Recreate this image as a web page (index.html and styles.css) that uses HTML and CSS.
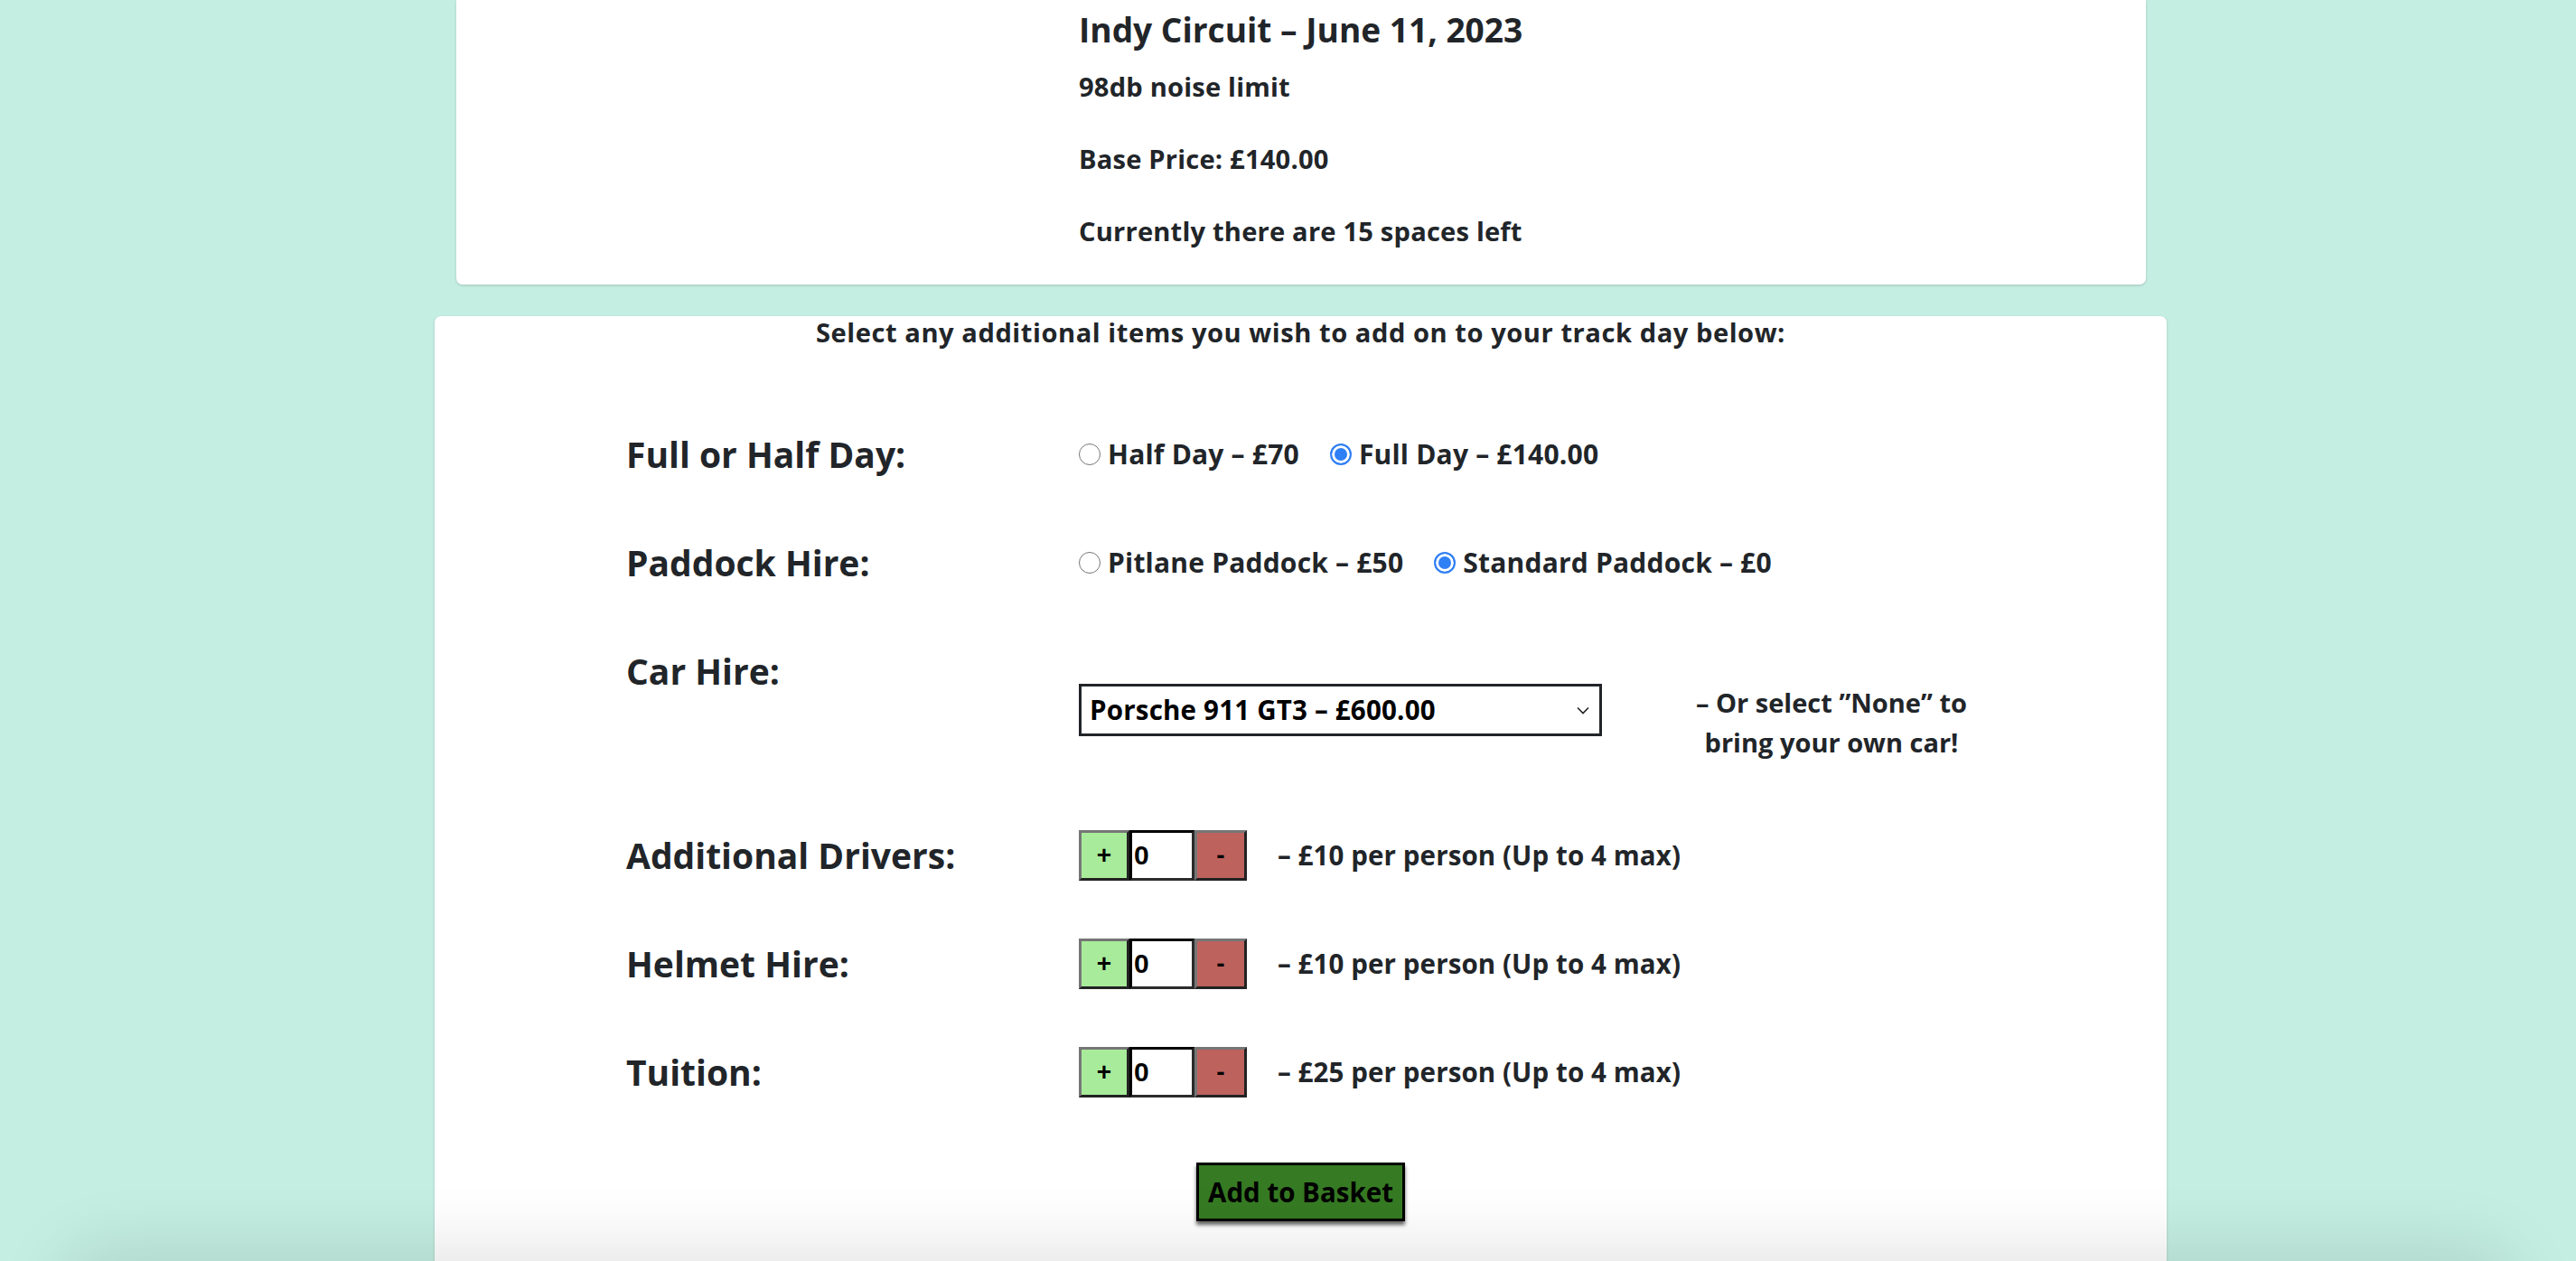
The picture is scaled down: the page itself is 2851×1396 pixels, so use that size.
FILE: index.html
```html
<!DOCTYPE html>
<html lang="en">
<head>
<meta charset="utf-8">
<title>Indy Circuit – June 11, 2023</title>
<link rel="stylesheet" href="styles.css">
</head>
<body>
<main class="page">
  <section class="card info">
    <h2 class="title">Indy Circuit – June 11, 2023</h2>
    <p class="fact">98db noise limit</p>
    <p class="fact">Base Price: £140.00</p>
    <p class="fact">Currently there are 15 spaces left</p>
  </section>

  <section class="card options">
    <p class="intro">Select any additional items you wish to add on to your track day below:</p>
    <div class="rows">
      <div class="row">
        <h3 class="label">Full or Half Day:</h3>
        <div class="control">
          <label class="opt"><input type="radio" name="day"><span>Half Day – £70</span></label>
          <label class="opt"><input type="radio" name="day" checked><span>Full Day – £140.00</span></label>
        </div>
      </div>
      <div class="row">
        <h3 class="label">Paddock Hire:</h3>
        <div class="control">
          <label class="opt"><input type="radio" name="paddock"><span>Pitlane Paddock – £50</span></label>
          <label class="opt"><input type="radio" name="paddock" checked><span>Standard Paddock – £0</span></label>
        </div>
      </div>
      <div class="row car">
        <h3 class="label">Car Hire:</h3>
        <div class="control">
          <div class="select-wrap">
            <select class="car-select">
              <option>Porsche 911 GT3 – £600.00</option>
              <option>None</option>
            </select>
            <svg class="chev" width="14" height="9" viewBox="0 0 14 9"><path d="M1 1.5 L7 7.5 L13 1.5" fill="none" stroke="#222" stroke-width="1.6"/></svg>
          </div>
        </div>
        <p class="note">– Or select ”None” to<br>bring your own car!</p>
      </div>
      <div class="row">
        <h3 class="label">Additional Drivers:</h3>
        <div class="control">
          <div class="stepper"><button class="step plus">+</button><input class="qty" type="text" value="0"><button class="step minus">-</button></div>
          <span class="desc">– £10 per person (Up to 4 max)</span>
        </div>
      </div>
      <div class="row">
        <h3 class="label">Helmet Hire:</h3>
        <div class="control">
          <div class="stepper"><button class="step plus">+</button><input class="qty" type="text" value="0"><button class="step minus">-</button></div>
          <span class="desc">– £10 per person (Up to 4 max)</span>
        </div>
      </div>
      <div class="row">
        <h3 class="label">Tuition:</h3>
        <div class="control">
          <div class="stepper"><button class="step plus">+</button><input class="qty" type="text" value="0"><button class="step minus">-</button></div>
          <span class="desc">– £25 per person (Up to 4 max)</span>
        </div>
      </div>
    </div>
    <div class="actions"><button class="basket">Add to Basket</button></div>
  </section>
</main>
<div class="fade"></div>
</body>
</html>
```

FILE: styles.css
```css
html, body {
  margin: 0;
  padding: 0;
}
body {
  background: #c4eee2;
  font-family: "Open Sans", "Liberation Sans", sans-serif;
  font-weight: 700;
  color: #212529;
  overflow: hidden;
}
.page {
  display: flex;
  flex-direction: column;
  align-items: flex-start;
  gap: 35px;
}
.card {
  background: #fff;
  border-radius: 0 0 7px 7px;
  box-shadow: 0 1px 3px rgba(0, 0, 0, 0.18);
  box-sizing: border-box;
}
.info {
  margin-left: 505px;
  width: 1870px;
  padding: 11px 0 0 689px;
}
.title {
  margin: 0 0 20px;
  font-size: 37.1px;
  line-height: 43.7px;
  font-weight: 700;
  letter-spacing: 0;
}
.fact {
  margin: 0 0 36.4px;
  font-size: 29.1px;
  line-height: 43.6px;
  letter-spacing: 0.2px;
}
.options {
  margin-left: 481px;
  width: 1917px;
  border-radius: 7px 7px 0 0;
  padding: 1px 0 80px;
}
.intro {
  margin: 0 0 57px;
  text-align: center;
  font-size: 29.1px;
  line-height: 35px;
  letter-spacing: 0.55px;
}
.rows {
  display: flex;
  flex-direction: column;
  padding-left: 212px;
}
.row {
  display: grid;
  grid-template-columns: 501px 640px 386px;
  align-items: center;
  height: 120px;
}
.label {
  margin: 0;
  font-size: 39px;
  line-height: 43.7px;
  font-weight: 700;
  letter-spacing: 0;
  white-space: nowrap;
}
.control {
  display: flex;
  align-items: center;
  white-space: nowrap;
}
.opt {
  display: inline-flex;
  align-items: center;
  gap: 8px;
  margin-right: 34px;
  font-size: 30px;
  line-height: 35px;
  letter-spacing: 0.2px;
}
.opt input {
  appearance: none;
  -webkit-appearance: none;
  margin: 0;
  width: 24px;
  height: 24px;
  border-radius: 50%;
  border: 1.8px solid #767676;
  background: #fff;
  box-sizing: border-box;
  flex: none;
}
.opt input:checked {
  border: 2px solid #2f7ff5;
  background: #2f7ff5;
  box-shadow: inset 0 0 0 3px #fff;
}
.row.car {
  height: 204px;
  align-items: start;
}
.row.car .label {
  padding-top: 38px;
}
.row.car .control {
  margin-top: 74px;
}
.select-wrap {
  position: relative;
  display: inline-block;
}
.car-select {
  appearance: none;
  -webkit-appearance: none;
  width: 579px;
  height: 58px;
  border: 3.6px solid #212529;
  border-radius: 0;
  background: #fff;
  color: #000;
  font-family: "Open Sans", "Liberation Sans", sans-serif;
  font-weight: 700;
  font-size: 29.5px;
  letter-spacing: 0.2px;
  padding: 0 0 0 9px;
  margin: 0;
}
.chev {
  position: absolute;
  right: 14px;
  top: 25px;
  pointer-events: none;
}
.note {
  margin: 73px 0 0;
  text-align: center;
  font-size: 29px;
  line-height: 44px;
  letter-spacing: 0;
}
.stepper {
  display: flex;
  height: 56px;
}
.step {
  height: 56px;
  margin: 0;
  padding: 0;
  border: 3.6px solid;
  border-color: #767676 #222 #222 #767676;
  border-radius: 0;
  color: #000;
  font-family: "Liberation Sans", Arial, sans-serif;
  font-weight: 700;
  font-size: 28px;
  line-height: 1;
  box-sizing: border-box;
}
.plus {
  width: 56px;
  background: #a8eb9a;
}
.minus {
  width: 58px;
  background: #bd625d;
}
.qty {
  width: 72px;
  height: 56px;
  margin: 0;
  padding: 0 2px;
  border: 3.8px solid;
  border-color: #000 #2b2b2b #2b2b2b #000;
  border-radius: 0;
  box-sizing: border-box;
  background: #fff;
  color: #000;
  font-family: "Liberation Sans", Arial, sans-serif;
  font-weight: 700;
  font-size: 30px;
}
.desc {
  margin-left: 34px;
  font-size: 29.5px;
  line-height: 35px;
  letter-spacing: 0.1px;
}
.actions {
  display: flex;
  justify-content: center;
  margin-top: 40px;
}
.basket {
  height: 65px;
  padding: 0 10px;
  margin: 0;
  border: 3.6px solid #000;
  border-radius: 0;
  background: #367a23;
  color: #000;
  font-family: "Open Sans", "Liberation Sans", sans-serif;
  font-weight: 700;
  font-size: 29.5px;
  box-shadow: 0 4px 4px rgba(0, 0, 0, 0.6);
}
.fade {
  position: fixed;
  left: 80px;
  right: 80px;
  bottom: -70px;
  height: 70px;
  border-radius: 70px;
  background: #eee;
  box-shadow: 0 0 80px 10px rgba(0, 0, 0, 0.12);
}
```
